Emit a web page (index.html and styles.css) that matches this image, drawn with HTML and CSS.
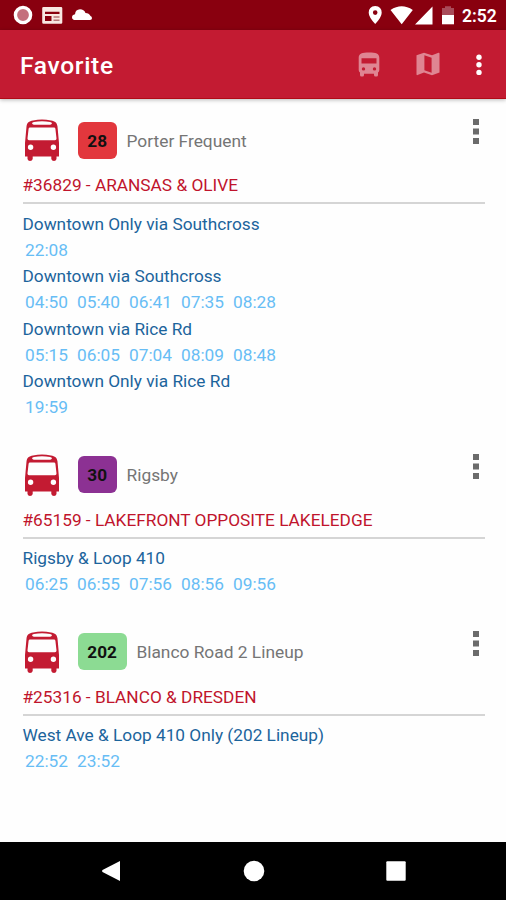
FILE: index.html
```html
<!DOCTYPE html>
<html lang="en">
<head>
<meta charset="utf-8">
<title>Favorite</title>
<link rel="stylesheet" href="styles.css">
</head>
<body>
<svg class="defs" aria-hidden="true">
  <symbol id="bus" viewBox="0 0 36 43">
    <path fill-rule="evenodd" d="M2.500 7.500C3 3.500 5 2 9 1.400Q18-.4 27 1.400C31 2 33 3.500 33.500 7.500L35 24V37.500H32.500V40Q32 42 30 42Q27.800 42 27.300 40V37.500H8.700V40Q8.200 42 6 42Q4 42 3.500 40V37.500H1V24ZM8 4.300Q8.500 5.800 10 5.700H26Q27.500 5.800 28 4.300Q27.800 3.400 26 3Q18 1.500 10 3Q8.200 3.400 8 4.300ZM6 8.500Q4.800 8.500 4.600 9.700L3.500 19.500Q3.500 21.200 5 21.200H31Q32.500 21.200 32.500 19.500L31.400 9.700Q31.200 8.500 30 8.500ZM6.600 25.500A2.700 2.700 0 1 0 6.600 30.900A2.700 2.700 0 1 0 6.600 25.500ZM29.400 25.500A2.700 2.700 0 1 0 29.400 30.900A2.700 2.700 0 1 0 29.400 25.500Z"/>
  </symbol>
  <symbol id="dots" viewBox="0 0 6 26">
    <path d="M0 0H6V6H0ZM0 9.500H6V15.500H0ZM0 19H6V25H0Z"/>
  </symbol>
</svg>
<div class="status">
  <svg class="status-left" width="80" height="30" viewBox="0 0 80 30">
    <circle cx="10" cy="15" r="7.600" fill="#c46f7c" stroke="#fff" stroke-width="3.400"/>
    <path fill="#f8e8e3" fill-rule="evenodd" d="M30.500 7H48Q49.300 7 49.300 8.300V22.500Q49.300 23.800 48 23.800H30.500Q29.200 23.800 29.200 22.500V8.300Q29.200 7 30.500 7ZM32 11.700V14H46.500V11.700ZM32 16V21H38.500V16Z"/>
    <path stroke="#b77679" stroke-width="1.400" d="M40.500 17H46.500M40.500 20.300H46.500"/>
    <path fill="#fff" d="M62.500 20Q59 20 59 17.200Q59 14.700 62 14.200Q62.500 9.500 67 9.300Q71 9.300 72.500 13Q76 13 77.500 16Q79 16.300 79 18.300Q79 20 77 20Z"/>
  </svg>
  <svg class="status-right" width="90" height="30" viewBox="0 0 90 30">
    <path fill="#fff" fill-rule="evenodd" d="M7.200 6Q13.700 6.500 13.700 12.700Q13.700 17 7.200 24Q.7 17 .7 12.700Q.7 6.500 7.200 6ZM7.200 10.300A2.300 2.300 0 1 0 7.200 14.900A2.300 2.300 0 1 0 7.200 10.300Z"/>
    <path fill="#fff" d="M22.500 10Q33.700 2.500 44.800 10L33.700 24.300ZM47 24.500L64.500 6.500V24.500Z"/>
    <path fill="#a94b59" d="M74 8H77V6.300H83V8H86V15H74Z"/>
    <path fill="#fff" d="M74 15H86V24.300H74Z"/>
  </svg>
  <span class="clock">2:52</span>
</div>
<header class="appbar">
  <h1>Favorite</h1>
  <svg class="act-bus" width="22" height="25" viewBox="0 0 22 25">
    <path fill="#df8592" fill-rule="evenodd" d="M.7 6C.7 1.500 4 .5 11 .5S21.300 1.500 21.300 6V18Q21.300 19.500 20 20.500V23Q20 24.500 18.500 24.500H17.500Q16 24.500 16 23V21.700H6V23Q6 24.500 4.500 24.500H3.500Q2 24.500 2 23V20.500Q.7 19.500 .7 18ZM3.500 6.300V11.500H18.500V6.300ZM5.500 15.200A1.700 1.700 0 1 0 5.500 18.600A1.700 1.700 0 1 0 5.500 15.200ZM16.500 15.200A1.700 1.700 0 1 0 16.500 18.600A1.700 1.700 0 1 0 16.500 15.200Z"/>
  </svg>
  <svg class="act-map" width="24" height="24" viewBox="0 0 24 24">
    <path fill="#df8592" fill-rule="evenodd" d="M.5 3.200L8 .7L16 3.300L22.500 .8Q23.500 .6 23.500 1.600V20.500L16 23.300L8 20.600L1.500 23.100Q.5 23.300 .5 22.300ZM8.400 3.300V18.200L15.600 20.700V5.700Z"/>
  </svg>
  <svg class="act-more" width="6" height="22" viewBox="0 0 6 22">
    <g fill="#fff"><circle cx="3" cy="3.200" r="2.700"/><circle cx="3" cy="10.800" r="2.700"/><circle cx="3" cy="18.400" r="2.700"/></g>
  </svg>
</header>
<main>
  <section class="card">
    <div class="head"><svg class="bus"><use href="#bus"/></svg><span class="badge red">28</span><span class="route">Porter Frequent</span><svg class="dots"><use href="#dots"/></svg></div>
    <div class="stop">#36829 - ARANSAS &amp; OLIVE</div>
    <div class="dir">Downtown Only via Southcross</div>
    <div class="times"><span>22:08</span></div>
    <div class="dir">Downtown via Southcross</div>
    <div class="times"><span>04:50</span><span>05:40</span><span>06:41</span><span>07:35</span><span>08:28</span></div>
    <div class="dir">Downtown via Rice Rd</div>
    <div class="times"><span>05:15</span><span>06:05</span><span>07:04</span><span>08:09</span><span>08:48</span></div>
    <div class="dir">Downtown Only via Rice Rd</div>
    <div class="times"><span>19:59</span></div>
  </section>
  <section class="card">
    <div class="head"><svg class="bus"><use href="#bus"/></svg><span class="badge purple">30</span><span class="route">Rigsby</span><svg class="dots"><use href="#dots"/></svg></div>
    <div class="stop">#65159 - LAKEFRONT OPPOSITE LAKELEDGE</div>
    <div class="dir">Rigsby &amp; Loop 410</div>
    <div class="times"><span>06:25</span><span>06:55</span><span>07:56</span><span>08:56</span><span>09:56</span></div>
  </section>
  <section class="card">
    <div class="head"><svg class="bus"><use href="#bus"/></svg><span class="badge green">202</span><span class="route">Blanco Road 2 Lineup</span><svg class="dots"><use href="#dots"/></svg></div>
    <div class="stop">#25316 - BLANCO &amp; DRESDEN</div>
    <div class="dir">West Ave &amp; Loop 410 Only (202 Lineup)</div>
    <div class="times"><span>22:52</span><span>23:52</span></div>
  </section>
</main>
<nav class="navbar">
  <svg width="20" height="22" viewBox="0 0 20 22"><path fill="#fff" d="M19 1V21L1.500 12Q.5 11 1.500 10Z"/></svg>
  <svg width="22" height="22" viewBox="0 0 22 22"><circle cx="11" cy="11" r="10.300" fill="#fff"/></svg>
  <svg width="20" height="20" viewBox="0 0 20 20"><rect x=".3" y=".3" width="19.400" height="19.400" rx="1" fill="#fff"/></svg>
</nav>
</body>
</html>
```
FILE: styles.css
```css
* { box-sizing: border-box; }
body {
  margin: 0;
  width: 506px;
  height: 900px;
  overflow: hidden;
  display: flex;
  flex-direction: column;
  background: #fefefe;
  font-family: Roboto, "Liberation Sans", sans-serif;
}
svg { display: block; flex: none; }
.defs { display: none; }
.status {
  height: 30px;
  flex: none;
  display: flex;
  align-items: center;
  background: #89000f;
  padding: 0 8px 0 13px;
}
.status-right { margin-left: auto; }
.clock {
  width: 36px;
  margin: 2px 0 0 4px;
  font-size: 17.5px;
  font-weight: 600;
  line-height: 30px;
  color: #fff;
  white-space: nowrap;
}
.appbar {
  height: 69px;
  flex: none;
  display: flex;
  align-items: center;
  padding: 0 24px 0 20px;
  background: #c31b32;
  border-bottom: 1px solid #b00b16;
  box-shadow: 0 1px 4px rgba(0, 0, 0, .28);
}
h1 {
  margin: 3px auto 0 0;
  font-size: 24.6px;
  line-height: 30px;
  font-weight: 500;
  letter-spacing: .65px;
  color: #fff;
}
.act-bus { margin-right: 36px; }
.act-map { margin-right: 36.5px; }
.act-more { margin-top: 2px; }
main {
  flex: 1;
  min-height: 0;
  padding: 5px 21px 0 22.5px;
}
.card { padding-bottom: 18px; }
.head {
  height: 68px;
  display: flex;
  align-items: center;
  padding-top: 5px;
}
.bus {
  width: 36px;
  height: 43px;
  margin: 0 17.5px 0 1.5px;
  fill: #c31b32;
}
.badge {
  height: 37px;
  margin-top: -1px;
  padding: 0 9.8px;
  border-radius: 6px;
  font-size: 17.2px;
  font-weight: 700;
  line-height: 38px;
  color: #111;
}
.red { background: #e2373d; }
.purple { background: #8c3193; }
.green { background: #8cdb93; }
.route {
  margin-left: 9.7px;
  font-size: 17.35px;
  color: #757575;
}
.dots {
  width: 6px;
  height: 26px;
  margin: -17px 6px 0 auto;
  fill: #6b6b6b;
}
.stop {
  height: 32px;
  margin-bottom: 6.5px;
  border-bottom: 2px solid #d5d5d5;
  font-size: 17.25px;
  line-height: 27px;
  color: #c0142c;
}
.dir, .times {
  height: 26.25px;
  font-size: 17.25px;
  line-height: 26.25px;
  white-space: nowrap;
}
.dir { color: #1c649c; }
.times {
  display: flex;
  gap: 8px;
  padding-left: 2.5px;
  color: #67bdf5;
}
.times span { width: 44px; }
.navbar {
  height: 58px;
  flex: none;
  display: flex;
  align-items: center;
  justify-content: space-between;
  padding: 0 100px 0 101px;
  background: #000;
}
```
